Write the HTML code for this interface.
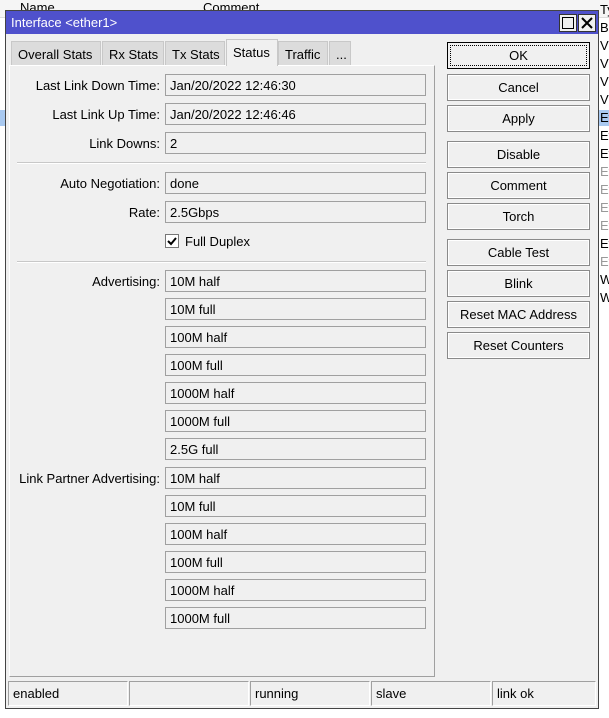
<!DOCTYPE html>
<html><head><style>
*{box-sizing:border-box;margin:0;padding:0}
body{width:609px;height:718px;background:#fff;font-family:"Liberation Sans",sans-serif;font-size:13px;color:#000;position:relative;overflow:hidden}
.a{position:absolute}
.bg{background:#f0f0f0}
.f{position:absolute;left:165px;width:261px;height:22px;border:1px solid #a0a0a0;background:#f0f0f0;padding:3px 0 0 4px}
.l{position:absolute;right:449px;text-align:right;white-space:nowrap}
.b{position:absolute;left:447px;width:143px;height:27px;border:1px solid #8a8a8a;background:#f0f0f0;text-align:center;padding-top:5px;box-shadow:inset 0 0 0 1px #fff}
.t{position:absolute;top:41px;height:24px;background:#dcdcdc;border:1px solid #c8c8c8;border-bottom:none;padding:5px 0 0 6px}
.s{position:absolute;top:681px;height:25px;border:1px solid #a0a0a0;border-right-color:#fff;border-bottom-color:#fff;padding:4px 0 0 4px}
.hr{position:absolute;left:17px;width:409px;height:2px;border-top:1px solid #c8c8c8;border-bottom:1px solid #fff}
.bk{position:absolute;left:600px;font-size:13px}
</style></head><body>
<!-- background list -->
<div class="a" style="left:0;top:0;width:609px;height:18px;background:#f5f5f5;border-bottom:1px solid #ddd"></div>
<div class="a" style="left:20px;top:0">Name</div><div class="a" style="left:203px;top:0">Comment</div>
<div class="a" style="left:0;top:110px;width:6px;height:16px;background:#a9c9f0"></div>
<div class="a" style="left:599px;top:110px;width:10px;height:16px;background:#a9c9f0"></div>
<div class="bk" style="top:2px">Ty</div><div class="bk" style="top:20px">Br</div><div class="bk" style="top:38px">VL</div><div class="bk" style="top:56px">VL</div><div class="bk" style="top:74px">VL</div><div class="bk" style="top:92px">VL</div><div class="bk" style="top:110px">Et</div><div class="bk" style="top:128px">Et</div><div class="bk" style="top:146px">Et</div><div class="bk" style="top:164px;color:#999">Et</div><div class="bk" style="top:182px;color:#999">Et</div><div class="bk" style="top:200px;color:#999">Et</div><div class="bk" style="top:218px;color:#999">Et</div><div class="bk" style="top:236px">Et</div><div class="bk" style="top:254px;color:#999">Et</div><div class="bk" style="top:272px">W</div><div class="bk" style="top:290px">W</div>
<!-- window -->
<div class="a bg" style="left:5px;top:10px;width:594px;height:699px;border:1px solid #444"></div>
<div class="a" style="left:6px;top:11px;width:592px;height:23px;background:#4f51cc;color:#fff;padding:4px 0 0 5px">Interface &lt;ether1&gt;</div>
<div class="a" style="left:559px;top:14px;width:18px;height:18px;background:#f0f0f0;border:1px solid #333"><div class="a" style="left:2px;top:2px;width:12px;height:12px;border:1.5px solid #000"></div></div>
<div class="a" style="left:578px;top:14px;width:18px;height:18px;background:#f0f0f0;border:1px solid #333"><svg width="16" height="16" style="position:absolute;left:0;top:0"><path d="M3 3L13 13M13 3L3 13" stroke="#000" stroke-width="2"/></svg></div>
<!-- tabs -->
<div class="t" style="left:11px;width:90px">Overall Stats</div>
<div class="t" style="left:102px;width:62px">Rx Stats</div>
<div class="t" style="left:165px;width:60px">Tx Stats</div>
<div class="t" style="left:226px;width:52px;top:39px;height:27px;background:#f0f0f0;z-index:2;padding-top:5px">Status</div>
<div class="t" style="left:278px;width:50px">Traffic</div>
<div class="t" style="left:329px;width:22px">...</div>
<div class="a" style="left:9px;top:65px;width:426px;height:612px;border:1px solid #a0a0a0;border-top-color:#fff;border-left-color:#fff;background:#f0f0f0"></div>
<!-- fields -->
<div class="l" style="top:78px">Last Link Down Time:</div><div class="f" style="top:74px">Jan/20/2022 12:46:30</div>
<div class="l" style="top:107px">Last Link Up Time:</div><div class="f" style="top:103px">Jan/20/2022 12:46:46</div>
<div class="l" style="top:136px">Link Downs:</div><div class="f" style="top:132px">2</div>
<div class="hr" style="top:162px"></div>
<div class="l" style="top:176px">Auto Negotiation:</div><div class="f" style="top:172px">done</div>
<div class="l" style="top:205px">Rate:</div><div class="f" style="top:201px">2.5Gbps</div>
<div class="a" style="left:165px;top:234px;width:14px;height:14px;border:1px solid #777;background:#fff"><svg width="12" height="12" style="position:absolute;left:0;top:0"><path d="M2 6L5 9L10 3" stroke="#000" stroke-width="2" fill="none"/></svg></div>
<div class="a" style="left:185px;top:234px">Full Duplex</div>
<div class="hr" style="top:261px"></div>
<div class="l" style="top:274px">Advertising:</div>
<div class="f" style="top:270px">10M half</div><div class="f" style="top:298px">10M full</div><div class="f" style="top:326px">100M half</div><div class="f" style="top:354px">100M full</div><div class="f" style="top:382px">1000M half</div><div class="f" style="top:410px">1000M full</div><div class="f" style="top:438px">2.5G full</div>
<div class="l" style="top:471px">Link Partner Advertising:</div>
<div class="f" style="top:467px">10M half</div><div class="f" style="top:495px">10M full</div><div class="f" style="top:523px">100M half</div><div class="f" style="top:551px">100M full</div><div class="f" style="top:579px">1000M half</div><div class="f" style="top:607px">1000M full</div>
<!-- buttons -->
<div class="b" style="top:42px;border:1px solid #000;box-shadow:none;outline:1px dotted #000;outline-offset:-4px">OK</div>
<div class="b" style="top:74px">Cancel</div>
<div class="b" style="top:105px">Apply</div>
<div class="b" style="top:141px">Disable</div>
<div class="b" style="top:172px">Comment</div>
<div class="b" style="top:203px">Torch</div>
<div class="b" style="top:239px">Cable Test</div>
<div class="b" style="top:270px">Blink</div>
<div class="b" style="top:301px">Reset MAC Address</div>
<div class="b" style="top:332px">Reset Counters</div>
<!-- status -->
<div class="s" style="left:8px;width:120px">enabled</div>
<div class="s" style="left:129px;width:120px"></div>
<div class="s" style="left:250px;width:120px">running</div>
<div class="s" style="left:371px;width:120px">slave</div>
<div class="s" style="left:492px;width:104px">link ok</div>
</body></html>
